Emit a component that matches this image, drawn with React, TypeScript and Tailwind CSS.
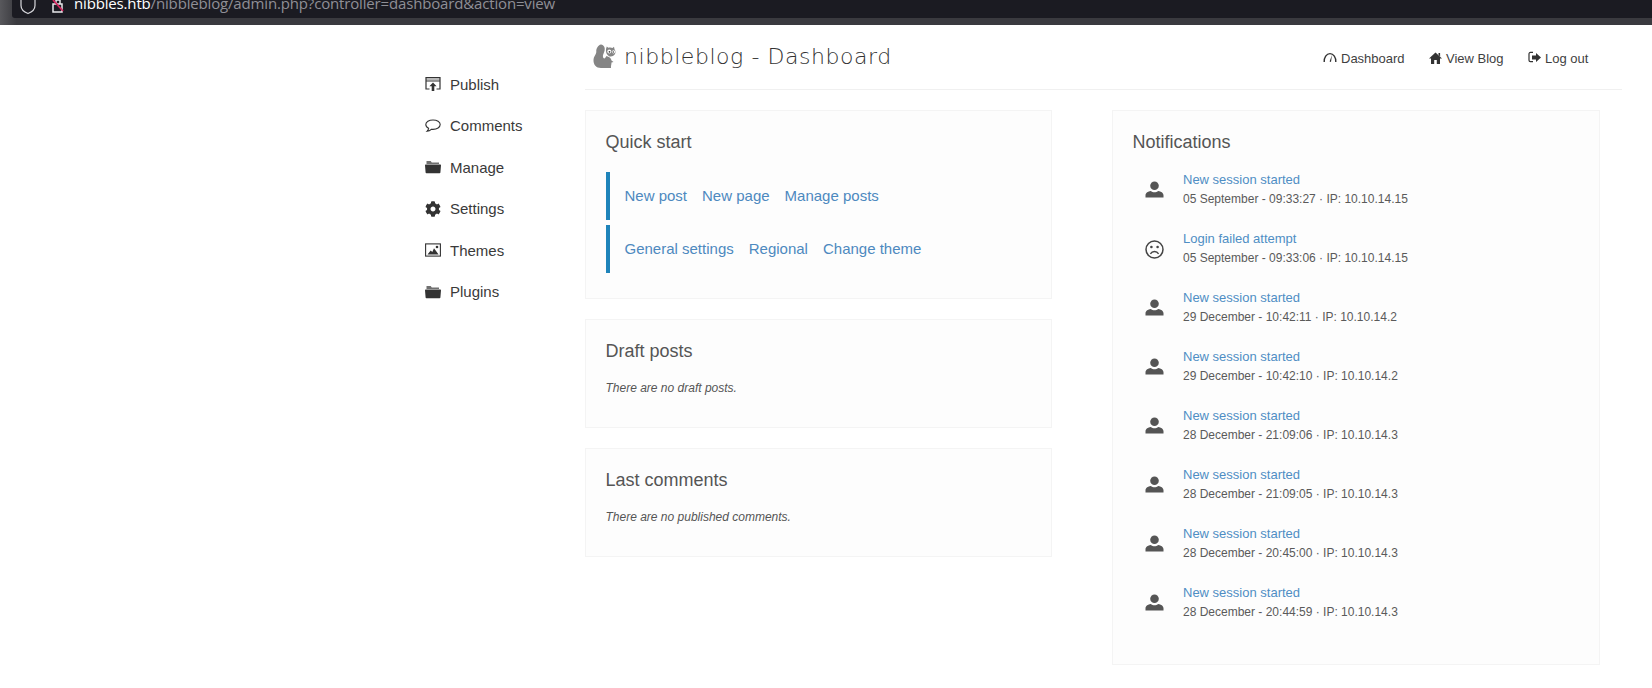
import React from "react";
import { FaCog } from "react-icons/fa";

const sans = "font-['Liberation_Sans',Arial,sans-serif]";

const PublishIcon = () => (
  <svg width="16" height="16" viewBox="0 0 16 16" className="text-[#333]">
    <path d="M1 5V1.5h14V13h-3.5M4.5 13H1V5h14" fill="none" stroke="currentColor" strokeWidth="1.2" />
    <path d="M1 1h14v3.2H1z" fill="currentColor" opacity="0.35" />
    <path d="M8 6.5l3.6 3.8H9.3V15H6.7v-4.7H4.4z" fill="currentColor" />
  </svg>
);

const CommentIcon = () => (
  <svg width="16" height="14" viewBox="0 0 16 14" className="text-[#333]">
    <path
      d="M8 1C4 1 .8 2.9.8 5.6c0 1.6 1.1 2.9 2.8 3.7-.2 1.2-.8 2.2-1.6 3 1.8-.2 3.3-1 4.3-2 .5.1 1.1.1 1.7.1 4 0 7.2-2.1 7.2-4.8S12 1 8 1z"
      fill="none"
      stroke="currentColor"
      strokeWidth="1.1"
    />
  </svg>
);

const FolderIcon = () => (
  <svg width="16" height="14" viewBox="0 0 16 14" className="text-[#333]">
    <path d="M1.5 1h4.2l1.1 1.5h7.2V4H1.5z" fill="currentColor" opacity="0.7" />
    <path d="M.6 4.6h14.8c.3 0 .6.3.6.6l-.6 7.3c0 .4-.4.8-.8.8H1.4c-.4 0-.8-.4-.8-.8L0 5.2c0-.3.3-.6.6-.6z" fill="currentColor" />
  </svg>
);

const ImageIcon = () => (
  <svg width="16" height="14" viewBox="0 0 16 14" className="text-[#333]">
    <rect x="0.6" y="0.9" width="14.8" height="12.2" fill="none" stroke="currentColor" strokeWidth="1.1" />
    <path d="M2.5 11.5l3.2-4 1.6 1.5L9 5.2l4.6 6.3z" fill="currentColor" />
    <circle cx="12" cy="4" r="1.3" fill="currentColor" />
  </svg>
);

const GaugeIcon = () => (
  <svg width="14" height="11" viewBox="0 0 14 11" className="text-[#333]">
    <path d="M1.2 10C.9 5.5 3.5 1.6 7 1.6s6.1 3.9 5.8 8.4" fill="none" stroke="currentColor" strokeWidth="1.4" />
    <path d="M9 3L6.6 9.6 8 10z" fill="currentColor" />
  </svg>
);

const HomeIcon = () => (
  <svg width="13" height="12" viewBox="0 0 13 12" className="text-[#333]">
    <path d="M6.5.6L13 6.400h-2V12H7.800V8H5.200v4H2V6.400H0z" fill="currentColor" />
    <path d="M9.500 1h1.600v3.400L9.500 3z" fill="currentColor" />
  </svg>
);

const LogoutIcon = () => (
  <svg width="13" height="13" viewBox="0 0 13 13" className="text-[#333]">
    <path d="M5 1.4H2.4C1.6 1.4 1 2 1 2.8v6.4c0 .8.6 1.4 1.4 1.4H5" fill="none" stroke="currentColor" strokeWidth="1.2" />
    <path d="M8 2l5 4.5L8 11V8.4H4V4.6h4z" fill="currentColor" />
  </svg>
);

const PersonIcon = () => (
  <svg width="19" height="17" viewBox="0 0 19 17" className="text-[#555]">
    <circle cx="9.5" cy="4.7" r="4.3" fill="currentColor" />
    <path d="M.5 16.5v-2.2c0-2.6 2.6-4 5.2-4.4 1.1.9 2.4 1.3 3.8 1.3s2.7-.4 3.8-1.3c2.6.4 5.2 1.8 5.2 4.4v2.2z" fill="currentColor" />
  </svg>
);

const SadIcon = () => (
  <svg width="19" height="19" viewBox="0 0 19 19" className="text-[#444]">
    <circle cx="9.5" cy="9.5" r="8.5" fill="none" stroke="currentColor" strokeWidth="1.5" />
    <circle cx="6.4" cy="7" r="1.3" fill="currentColor" />
    <circle cx="12.6" cy="7" r="1.3" fill="currentColor" />
    <path d="M5.4 13.8c1-1.6 2.4-2.3 4.1-2.3s3.1.7 4.1 2.3" fill="none" stroke="currentColor" strokeWidth="1.4" />
  </svg>
);

const SquirrelLogo = () => (
  <svg width="25" height="25" viewBox="0 0 25 25">
    <path
      d="M8 .6c3 .7 4.500 3.400 3.500 6.400-.7 2.500-2 4-1.500 6 .4 1.700 1.500 1.800 2.500.5l1-1.500c2.500.7 4.500 2 5 4.500l2 1.500-2 .5c0 2-.8 3.700-.5 5.500H8C3 24 .5 20.500.5 16.500.5 12 3.500 10.500 3.300 7.500 3.100 5 5 1 8 .6z"
      fill="#858585"
    />
    <path d="M13 5l.8-2.500 1.500 1.300c1.500-.5 3-.4 4.200.2l1.500-1.300.5 2.500c1.200 1.500 1.300 3.800.2 5.300-1.400 1.900-4 2.500-6 1.400-2.400-1.300-3-4.600-2.700-6.400z" fill="#858585" />
    <circle cx="16.300" cy="7.500" r="2" fill="#fff" />
    <circle cx="20.500" cy="7.800" r="1.600" fill="#fff" />
    <circle cx="16.500" cy="7.800" r="0.900" fill="#444" />
    <circle cx="20.300" cy="8" r="0.800" fill="#444" />
  </svg>
);

const sideItems = [
  { label: "Publish", icon: <PublishIcon />, h: "h-[41px]" },
  { label: "Comments", icon: <CommentIcon />, h: "h-[42px]" },
  { label: "Manage", icon: <FolderIcon />, h: "h-[41px]" },
  { label: "Settings", icon: <FaCog className="text-[16px] text-[#333]" />, h: "h-[42px]" },
  { label: "Themes", icon: <ImageIcon />, h: "h-[41px]" },
  { label: "Plugins", icon: <FolderIcon />, h: "h-[42px]" },
];

const navItems = [
  { label: "Dashboard", icon: <GaugeIcon />, w: "w-[106px]" },
  { label: "View Blog", icon: <HomeIcon />, w: "w-[99px]" },
  { label: "Log out", icon: <LogoutIcon />, w: "w-[60px]" },
];

const notifications = [
  { title: "New session started", meta: "05 September - 09:33:27 · IP: 10.10.14.15" },
  { title: "Login failed attempt", meta: "05 September - 09:33:06 · IP: 10.10.14.15", sad: true },
  { title: "New session started", meta: "29 December - 10:42:11 · IP: 10.10.14.2" },
  { title: "New session started", meta: "29 December - 10:42:10 · IP: 10.10.14.2" },
  { title: "New session started", meta: "28 December - 21:09:06 · IP: 10.10.14.3" },
  { title: "New session started", meta: "28 December - 21:09:05 · IP: 10.10.14.3" },
  { title: "New session started", meta: "28 December - 20:45:00 · IP: 10.10.14.3" },
  { title: "New session started", meta: "28 December - 20:44:59 · IP: 10.10.14.3" },
];

const Panel = ({ title, h, children }: { title: string; h: string; children: React.ReactNode }) => (
  <div className={`${h} border border-[#f4f4f4] bg-[#fdfdfd] px-[19.5px] pt-[20px]`}>
    <h3 className="text-[18px] leading-[22px] text-[#555]">{title}</h3>
    {children}
  </div>
);

const QuickRow = ({ links }: { links: string[] }) => (
  <div className="flex h-[48px] items-center gap-[15px] border-l-[4px] border-[#1f84ba] pl-[15px] text-[15px] text-[#4d89bf]">
    {links.map((l) => (
      <span key={l}>{l}</span>
    ))}
  </div>
);

export default function App() {
  return (
    <div className={`h-[688px] w-[1652px] overflow-hidden bg-white ${sans}`}>
      <div className="h-[25px] bg-[#45454a] bg-linear-to-r from-[#58585c] from-0% to-[#3a3a3f] to-[1%] pl-[12px]">
        <div className="flex h-[18px] items-start overflow-hidden rounded-bl-[3px] bg-[#1b1b22]">
          <svg width="16" height="18" viewBox="0 0 16 18" className="ml-[8px] text-[#d8d8dc]">
            <path d="M1 0v5.500C1 9.500 4 12 8 13.500c4-1.500 7-4 7-8V0" fill="none" stroke="currentColor" strokeWidth="1.200" />
          </svg>
          <svg width="15" height="14" viewBox="0 0 15 14" className="ml-[14px]">
            <path d="M3 4h9v8H3z" fill="none" stroke="#e8e8ea" strokeWidth="1.500" />
            <path d="M6 4V0h4v4" fill="none" stroke="#e8e8ea" strokeWidth="1.500" />
            <path d="M3 0l10 11" stroke="#d6235d" strokeWidth="1.700" />
          </svg>
          <div className="ml-[9px] mt-[-7px] whitespace-nowrap font-['Open_Sans',sans-serif] text-[15px] leading-[20px] tracking-[-0.16px] text-[#8f8f96]">
            <span className="text-white">nibbles.htb</span>/nibbleblog/admin.php?controller=dashboard&amp;action=view
          </div>
        </div>
      </div>

      <div className="flex">
        <aside className="w-[585px] pl-[424.5px] pt-[39.5px]">
          {sideItems.map((item) => (
            <div key={item.label} className={`flex items-center ${item.h} text-[15px] text-[#3a3a3a]`}>
              <span className="mb-[2px] flex w-[25.5px] items-center">{item.icon}</span>
              <span>{item.label}</span>
            </div>
          ))}
        </aside>

        <main className="w-[1037px]">
          <header className="flex h-[65px] items-center justify-between border-b border-[#f0f0f0] pb-[2px]">
            <div className="flex items-center pl-[8px]">
              <SquirrelLogo />
              <h1 className="ml-[6px] mt-[1px] font-['DejaVu_Sans',sans-serif] text-[22px] font-extralight tracking-[0.55px] text-[#333]">
                nibbleblog - Dashboard
              </h1>
            </div>
            <nav className="mr-[34px] mt-[5px] flex items-center whitespace-nowrap text-[13px] text-[#3f3f3f]">
              {navItems.map((n) => (
                <div key={n.label} className={`flex items-center gap-[4px] ${n.w}`}>
                  <span className="mb-[2px] flex items-center">{n.icon}</span>
                  <span>{n.label}</span>
                </div>
              ))}
            </nav>
          </header>

          <div className="mt-[20px] flex gap-[60px]">
            <div className="flex w-[467px] flex-col gap-[20px]">
              <Panel title="Quick start" h="h-[189px]">
                <div className="mt-[19px] flex flex-col gap-[5px]">
                  <QuickRow links={["New post", "New page", "Manage posts"]} />
                  <QuickRow links={["General settings", "Regional", "Change theme"]} />
                </div>
              </Panel>
              <Panel title="Draft posts" h="h-[109px]">
                <p className="mt-[19px] text-[12px] italic leading-[14px] text-[#555]">There are no draft posts.</p>
              </Panel>
              <Panel title="Last comments" h="h-[109px]">
                <p className="mt-[19px] text-[12px] italic leading-[14px] text-[#555]">There are no published comments.</p>
              </Panel>
            </div>

            <div className="h-[555px] w-[488px]">
              <Panel title="Notifications" h="h-full">
                <ul className="mt-[17px] flex flex-col pl-[10.5px]">
                  {notifications.map((n, i) => (
                    <li key={i} className="flex h-[59px] items-start">
                      <span className="mt-[11px] flex w-[40px] shrink-0 items-center pl-[2px]">
                        {n.sad ? <SadIcon /> : <PersonIcon />}
                      </span>
                      <div>
                        <div className="text-[13px] leading-[19px] text-[#4f8ec4]">{n.title}</div>
                        <div className="text-[12px] leading-[20px] text-[#5a5a5a]">{n.meta}</div>
                      </div>
                    </li>
                  ))}
                </ul>
              </Panel>
            </div>
          </div>
        </main>
      </div>
    </div>
  );
}
